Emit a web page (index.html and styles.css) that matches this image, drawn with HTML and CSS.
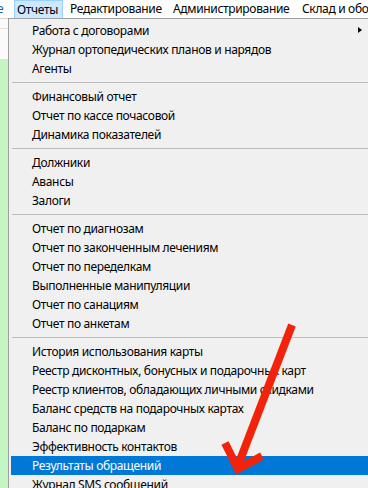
FILE: index.html
```
<!DOCTYPE html>
<html>
<head>
<meta charset="utf-8">
<link rel="stylesheet" href="styles.css">
</head>
<body>
<div class="menubar">
  <span class="mb-frag">е</span>
  <span class="mb-item mb-active">Отчеты</span>
  <span class="mb-item mb-2">Редактирование</span>
  <span class="mb-item mb-3">Администрирование</span>
  <span class="mb-item mb-4">Склад и оборудование</span>
</div>
<div class="body-row">
  <div class="left-strip">
    <div class="ls-top"></div>
    <div class="ls-green"></div>
  </div>
  <div class="menu">
    <div class="item sub">Работа с договорами<span class="arrow"></span></div>
    <div class="item">Журнал ортопедических планов и нарядов</div>
    <div class="item">Агенты</div>
    <div class="sep"></div>
    <div class="item">Финансовый отчет</div>
    <div class="item">Отчет по кассе почасовой</div>
    <div class="item">Динамика показателей</div>
    <div class="sep"></div>
    <div class="item">Должники</div>
    <div class="item">Авансы</div>
    <div class="item">Залоги</div>
    <div class="sep"></div>
    <div class="item">Отчет по диагнозам</div>
    <div class="item">Отчет по законченным лечениям</div>
    <div class="item">Отчет по переделкам</div>
    <div class="item">Выполненные манипуляции</div>
    <div class="item">Отчет по санациям</div>
    <div class="item">Отчет по анкетам</div>
    <div class="sep"></div>
    <div class="item">История использования карты</div>
    <div class="item">Реестр дисконтных, бонусных и подарочных карт</div>
    <div class="item">Реестр клиентов, обладающих личными скидками</div>
    <div class="item">Баланс средств на подарочных картах</div>
    <div class="item">Баланс по подаркам</div>
    <div class="item">Эффективность контактов</div>
    <div class="item hl">Результаты обращений</div>
    <div class="item">Журнал SMS сообщений</div>
  </div>
</div>
<svg class="annot" width="368" height="488" viewBox="0 0 368 488">
  <line x1="292" y1="325" x2="237" y2="468" stroke="#f3230b" stroke-width="8"/>
  <polyline points="225,443 238,469 262,456" fill="none" stroke="#f3230b" stroke-width="8" stroke-linejoin="miter"/>
</svg>
</body>
</html>
```
FILE: styles.css
```
html, body {
  margin: 0;
  padding: 0;
}
body {
  width: 368px;
  height: 488px;
  overflow: hidden;
  position: relative;
  font-family: "Noto Sans", "Segoe UI", sans-serif;
  font-size: 12px;
  letter-spacing: -0.33px;
  color: #000;
  background: #f0f0f0;
}
.menubar {
  height: 18px;
  background: #fff;
  display: flex;
  align-items: stretch;
  white-space: nowrap;
  overflow: hidden;
  line-height: 18px;
}
.mb-frag {
  flex: none;
  color: #0a62c4;
  margin-left: -3px;
  width: 9px;
  overflow: hidden;
}
.mb-item {
  flex: none;
  box-sizing: border-box;
  overflow: hidden;
}
.mb-active {
  margin-left: 8px;
  width: 49px;
  background: #cce8ff;
  border: 1px solid #99d1ff;
  border-bottom: none;
  line-height: 17px;
  padding-left: 2px;
}
.mb-2 { width: 103px; padding-left: 7px; }
.mb-3 { width: 129px; padding-left: 7px; }
.mb-4 { width: 120px; padding-left: 7px; }
.body-row {
  display: flex;
  height: 470px;
}
.left-strip {
  width: 8px;
  flex: none;
  display: flex;
  flex-direction: column;
}
.ls-top {
  height: 41px;
  background: #fafafa;
  border-top: 1px solid #d6d6d6;
  box-sizing: border-box;
  position: relative;
}
.ls-top::after {
  content: "";
  position: absolute;
  left: 0;
  right: 0;
  top: 9px;
  height: 1px;
  background: #e3e3e3;
}
.ls-green {
  flex: 1;
  background: #c3f6c3;
}
.menu {
  flex: 1;
  background: #f0f0f0;
  border-left: 1px solid #a0a0a0;
  border-top: 1px solid #a0a0a0;
  padding: 2px 0 0 2px;
  white-space: nowrap;
  overflow: hidden;
}
.item {
  height: 19px;
  line-height: 19px;
  padding-left: 21px;
  position: relative;
}
.item.hl {
  background: #0078d7;
  color: #fff;
}
.arrow {
  position: absolute;
  left: 347px;
  top: 6px;
  width: 0;
  height: 0;
  border-left: 4px solid #000;
  border-top: 3.5px solid transparent;
  border-bottom: 3.5px solid transparent;
}
.sep {
  height: 9px;
  position: relative;
}
.sep::after {
  content: "";
  position: absolute;
  left: 1px;
  right: 0;
  top: 4px;
  height: 1px;
  background: #bdbdbd;
}
.annot {
  position: absolute;
  left: 0;
  top: 0;
  pointer-events: none;
}
```
